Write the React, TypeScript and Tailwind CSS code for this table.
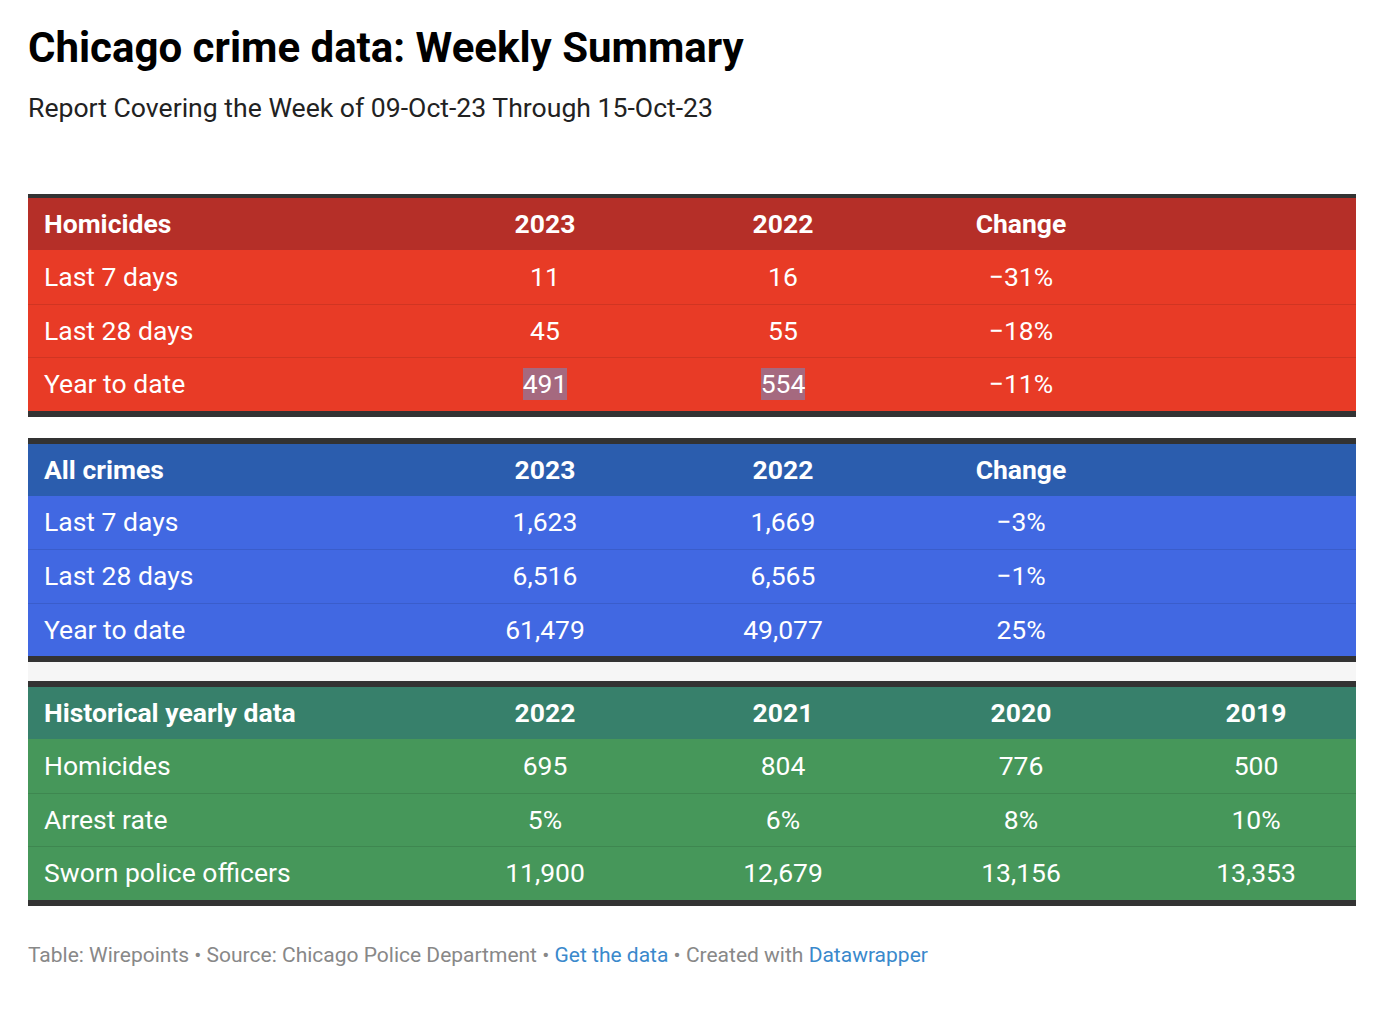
import React from "react";

type Val = string | { v: string; mark: boolean };

type Table = {
  head: string[];
  rows: Val[][];
  headBg: string;
  rowBg: string;
  topBorder: string;
};

const tables: Table[] = [
  {
    head: ["Homicides", "2023", "2022", "Change", ""],
    rows: [
      ["Last 7 days", "11", "16", "\u221231%", ""],
      ["Last 28 days", "45", "55", "\u221218%", ""],
      ["Year to date", { v: "491", mark: true }, { v: "554", mark: true }, "\u221211%", ""],
    ],
    headBg: "bg-[#b52f28]",
    rowBg: "bg-[#e83b26]",
    topBorder: "border-t-4",
  },
  {
    head: ["All crimes", "2023", "2022", "Change", ""],
    rows: [
      ["Last 7 days", "1,623", "1,669", "\u22123%", ""],
      ["Last 28 days", "6,516", "6,565", "\u22121%", ""],
      ["Year to date", "61,479", "49,077", "25%", ""],
    ],
    headBg: "bg-[#2b5dae]",
    rowBg: "bg-[#4168e2]",
    topBorder: "border-t-[6px]",
  },
  {
    head: ["Historical yearly data", "2022", "2021", "2020", "2019"],
    rows: [
      ["Homicides", "695", "804", "776", "500"],
      ["Arrest rate", "5%", "6%", "8%", "10%"],
      ["Sworn police officers", "11,900", "12,679", "13,156", "13,353"],
    ],
    headBg: "bg-[#37806b]",
    rowBg: "bg-[#46975a]",
    topBorder: "border-t-[6px]",
  },
];

const cols = "grid grid-cols-[398px_238px_238px_238px_1fr]";

function Cell({ value, i, bold }: { value: Val; i: number; bold?: boolean }) {
  const text = typeof value === "string" ? value : value.v;
  const mark = typeof value !== "string" && value.mark;
  return (
    <div
      className={
        (i === 0 ? "pl-4 justify-start" : i === 4 ? "pl-4 justify-center" : "justify-center") +
        (bold ? " font-bold" : "") +
        " flex items-center"
      }
    >
      {mark ? <span className="bg-[#a5697f] leading-[32px]">{text}</span> : text}
    </div>
  );
}

function DataTable({ t }: { t: Table }) {
  return (
    <div className={`${t.topBorder} border-b-[6px] border-[#333333] text-white text-[26.5px]`}>
      <div className={`${cols} ${t.headBg} h-[52px]`}>
        {t.head.map((h, i) => (
          <Cell key={i} value={h} i={i} bold />
        ))}
      </div>
      {t.rows.map((r, ri) => (
        <div
          key={ri}
          className={`${cols} ${t.rowBg} h-[53.5px] ${ri > 0 ? "border-t border-black/10" : ""}`}
        >
          {r.map((c, i) => (
            <Cell key={i} value={c} i={i} />
          ))}
        </div>
      ))}
    </div>
  );
}

export default function App() {
  return (
    <div className="min-h-screen bg-white px-[28px] pt-[24px] font-['Roboto',sans-serif] text-black w-[1384px]">
      <h1 className="text-[42px] font-bold leading-[48px]">Chicago crime data: Weekly Summary</h1>
      <p className="mt-[20px] text-[26.6px] leading-[32px] text-[#222]">
        Report Covering the Week of 09-Oct-23 Through 15-Oct-23
      </p>

      <div className="mt-[70px]">
        <DataTable t={tables[0]} />
        <div className="h-[21px]" />
        <DataTable t={tables[1]} />
        <div className="h-[19px] bg-[#f6f6f6]" />
        <DataTable t={tables[2]} />
      </div>

      <p className="mt-[36px] text-[21px] leading-[26px] text-[#888888]">
        Table: Wirepoints • Source: Chicago Police Department •{" "}
        <span className="text-[#3a89cc]">Get the data</span> • Created with{" "}
        <span className="text-[#3a89cc]">Datawrapper</span>
      </p>
    </div>
  );
}
